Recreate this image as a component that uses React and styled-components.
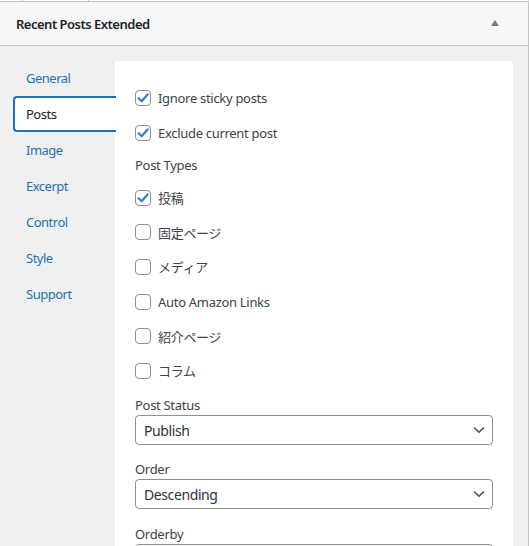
import React from "react";
import styled, { createGlobalStyle } from "styled-components";

const Global = createGlobalStyle`
  html, body { margin: 0; padding: 0; background: #ffffff; }
  body { font-family: "Noto Sans", "Noto Sans CJK JP", sans-serif; font-size: 13px; letter-spacing: -0.3px; color: #3c434a; overflow: hidden; }
`;

const Page = styled.div`
  width: 530px;
  height: 546px;
  overflow: hidden;
  position: relative;
`;

const TopStrip = styled.div`
  height: 1px;
  padding-left: 22px;
  display: flex;
`;

const StripTab = styled.div`
  width: 65px;
  border-left: 1px solid #c3c4c7;
  border-right: 1px solid #c3c4c7;
`;

const Postbox = styled.div`
  width: 528px;
  border: 1px solid #c3c4c7;
  border-left: none;
  border-bottom: none;
  background: #f0f0f1;
`;

const Header = styled.div`
  height: 43px;
  display: flex;
  align-items: center;
  justify-content: space-between;
  padding: 0 29px 0 16px;
  background: #f6f7f7;
  border-bottom: 1px solid #c3c4c7;
`;

const Title = styled.h2`
  margin: 0;
  font-size: 13px;
  font-weight: 600;
  letter-spacing: -0.5px;
  color: #1d2327;
`;

const Toggle = styled.span`
  width: 0;
  height: 0;
  border-left: 4px solid transparent;
  border-right: 4px solid transparent;
  border-bottom: 6px solid #787c82;
  margin-top: -1px;
`;

const Body = styled.div`
  display: flex;
  padding: 15px 15px 0 0;
  height: 500px;
`;

const Tabs = styled.ul`
  list-style: none;
  margin: -1px 0 0;
  padding: 0;
  width: 115px;
  flex: none;
`;

const Tab = styled.li`
  height: 36px;
  display: flex;
  align-items: center;
  margin-left: 13px;
  margin-right: ${(p) => (p.$active ? "-1px" : "0")};
  padding-left: 11px;
  border: 2px solid ${(p) => (p.$active ? "#2271b1" : "transparent")};
  border-right: none;
  border-radius: 4px 0 0 4px;
  background: ${(p) => (p.$active ? "#ffffff" : "transparent")};
  color: ${(p) => (p.$active ? "#1d2327" : "#2271b1")};
  box-sizing: border-box;
  font-size: 13px;
  letter-spacing: -0.5px;
  position: relative;
  z-index: 1;
`;

const Content = styled.div`
  flex: 1;
  background: #ffffff;
  border-radius: 0 4px 0 0;
  padding: 27px 20px 0 20px;
`;

const CheckRow = styled.label`
  display: flex;
  align-items: center;
  height: 20px;
  margin-bottom: 14.6px;
  gap: 7px;
  color: #3c434a;
`;

const Box = styled.span`
  width: 16px;
  height: 16px;
  box-sizing: border-box;
  border: 1px solid #8c8f94;
  border-radius: 4px;
  background: #fff;
  display: flex;
  align-items: center;
  justify-content: center;
  flex: none;
`;

const GroupLabel = styled.div`
  height: 20px;
  line-height: 20px;
  margin: -2px 0 12.6px;
  color: #3c434a;
`;

const FieldLabel = styled.div`
  height: 20px;
  line-height: 20px;
  margin-top: ${(p) => p.$mt || 0}px;
  color: #3c434a;
`;

const Select = styled.div`
  height: 30px;
  box-sizing: border-box;
  border: 1px solid #8c8f94;
  border-radius: 4px;
  display: flex;
  align-items: center;
  justify-content: space-between;
  padding: 0 7px 0 8px;
  color: #2c3338;
  font-size: 14px;
  letter-spacing: -0.4px;
`;

const Check = () => (
  <svg width="14" height="14" viewBox="0 0 14 14">
    <path d="M2.6 7.2 L5.6 10.2 L11.6 3.4" fill="none" stroke="#3582c4" strokeWidth="2.3" strokeLinecap="round" strokeLinejoin="round" />
  </svg>
);

const Chevron = () => (
  <svg width="12" height="8" viewBox="0 0 12 8">
    <path d="M1 1.5 L6 6.2 L11 1.5" fill="none" stroke="#50575e" strokeWidth="1.6" />
  </svg>
);

const CB = ({ checked, children }) => (
  <CheckRow>
    <Box>{checked && <Check />}</Box>
    <span>{children}</span>
  </CheckRow>
);

const tabs = ["General", "Posts", "Image", "Excerpt", "Control", "Style", "Support"];

export default function App() {
  return (
    <Page>
      <Global />
      <TopStrip>
        <StripTab />
      </TopStrip>
      <Postbox>
        <Header>
          <Title>Recent Posts Extended</Title>
          <Toggle />
        </Header>
        <Body>
          <Tabs>
            {tabs.map((t) => (
              <Tab key={t} $active={t === "Posts"}>{t}</Tab>
            ))}
          </Tabs>
          <Content>
            <CB checked>Ignore sticky posts</CB>
            <CB checked>Exclude current post</CB>
            <GroupLabel>Post Types</GroupLabel>
            <CB checked>投稿</CB>
            <CB>固定ページ</CB>
            <CB>メディア</CB>
            <CB>Auto Amazon Links</CB>
            <CB>紹介ページ</CB>
            <CB>コラム</CB>
            <FieldLabel $mt={0}>Post Status</FieldLabel>
            <Select>
              <span>Publish</span>
              <Chevron />
            </Select>
            <FieldLabel $mt={14}>Order</FieldLabel>
            <Select>
              <span>Descending</span>
              <Chevron />
            </Select>
            <FieldLabel $mt={15}>Orderby</FieldLabel>
            <Select>
              <span>Date</span>
              <Chevron />
            </Select>
          </Content>
        </Body>
      </Postbox>
    </Page>
  );
}
